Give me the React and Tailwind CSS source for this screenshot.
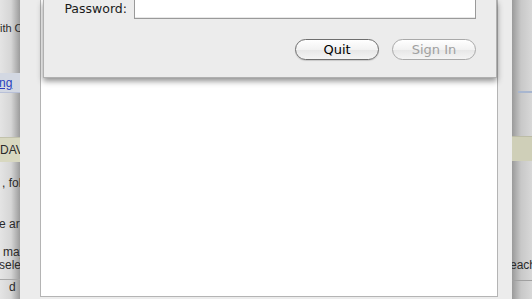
import React from 'react';

const font = { fontFamily: '"Liberation Sans", Arial, sans-serif' };
const mac = { fontFamily: '"DejaVu Sans", "Liberation Sans", sans-serif' };

const LeftStrip = () => (
    <div className="w-[20px] h-full overflow-hidden bg-[linear-gradient(to_right,#e4e4e4,#d6d6d6_55%,#9c9c9c)] text-[12px] text-[#2a2a2a]" style={font}>
        <div className="flex flex-col">
            <div className="h-[22px]" />
            <div className="whitespace-nowrap h-[13px] leading-[13px] -ml-[8px] text-[11px]">with Co</div>
            <div className="h-[38px]" />
            <div className="whitespace-nowrap h-[20px] leading-[20px] bg-[#d3d8e2] border-b border-[#b8c0d8]">
                <span className="text-[#2a3fbf] underline -ml-[1px] inline-block">ng</span>
            </div>
            <div className="h-[44px]" />
            <div className="whitespace-nowrap h-[25px] leading-[24px] -ml-[4px] bg-[#d8d8c0] border-t border-[#c2c2ac]">
                <span className="pl-[4px]">DAV</span>
            </div>
            <div className="h-[15px]" />
            <div className="whitespace-nowrap h-[13px] leading-[13px] pl-[2px]">, follo</div>
            <div className="h-[28px]" />
            <div className="whitespace-nowrap h-[13px] leading-[13px] -ml-[1px]">e are</div>
            <div className="h-[15px]" />
            <div className="whitespace-nowrap h-[13px] leading-[13px] pl-[3px]">may</div>
            <div className="whitespace-nowrap h-[13px] leading-[13px] -ml-[1px]">select</div>
            <div className="h-[7px]" />
            <div className="border-t border-[#a8a8a8] h-[12px] leading-[14px] pl-[9px] whitespace-nowrap">d</div>
        </div>
    </div>
);

const RightStrip = () => (
    <div className="w-[20px] h-full overflow-hidden bg-[linear-gradient(to_right,#9a9a9a,#c8c8c8_45%,#d8d8d8)] text-[12px] text-[#2a2a2a]" style={font}>
        <div className="flex flex-col">
            <div className="h-[91px]" />
            <div className="h-[2px] ml-[6px] bg-[#a8b6cf]" />
            <div className="h-[43px]" />
            <div className="h-[25px] bg-[#cfcfb8] border-t border-[#bcbca6]" />
            <div className="h-[98px]" />
            <div className="whitespace-nowrap h-[13px] leading-[13px] -ml-[2px]">each</div>
            <div className="h-[8px]" />
            <div className="h-[1px] bg-[#a0a0a0]" />
        </div>
    </div>
);

const Button = ({ children, disabled }) => (
    <button
        className={
            'h-[21px] w-[84px] rounded-full border text-[13px] leading-[19px] bg-[linear-gradient(to_bottom,#ffffff,#f2f2f2_50%,#e6e6e6_51%,#f4f4f4)] ' +
            (disabled ? 'border-[#a9a9a9] text-[#a0a0a0]' : 'border-[#6e6e6e] text-black shadow-[0_1px_1px_rgba(0,0,0,0.15)]')
        }
        style={mac}
    >
        {children}
    </button>
);

const App = () => {
    return (
        <div className="w-[532px] h-[299px] flex overflow-hidden bg-[#ececec]">
            <LeftStrip />
            <div className="relative w-[492px] h-full bg-[#ececec] flex flex-col px-[20px] pr-[14px]">
                <div className="h-[297px] bg-white border-x border-b border-[#b4b4b4]" />
                <div className="absolute left-[23px] top-0 w-[454px] h-[78px] bg-[#ececec] border-x border-b border-[#b0b0b0] shadow-[0_3px_6px_rgba(0,0,0,0.45)] flex flex-col">
                    <div className="flex items-start h-[19px]">
                        <div className="w-[83px] text-right text-[12.5px] leading-[19px] text-[#1a1a1a] -mt-[1px]" style={mac}>Password:</div>
                        <div className="ml-[7px] w-[342px] h-[19px] bg-white border-x border-b border-[#9a9a9a] shadow-[inset_0_-1px_0_#e8e8e8]" />
                    </div>
                    <div className="flex justify-end gap-[13px] mt-[20px] pr-[20px]">
                        <Button>Quit</Button>
                        <Button disabled>Sign In</Button>
                    </div>
                </div>
            </div>
            <RightStrip />
        </div>
    );
};

export default App;
